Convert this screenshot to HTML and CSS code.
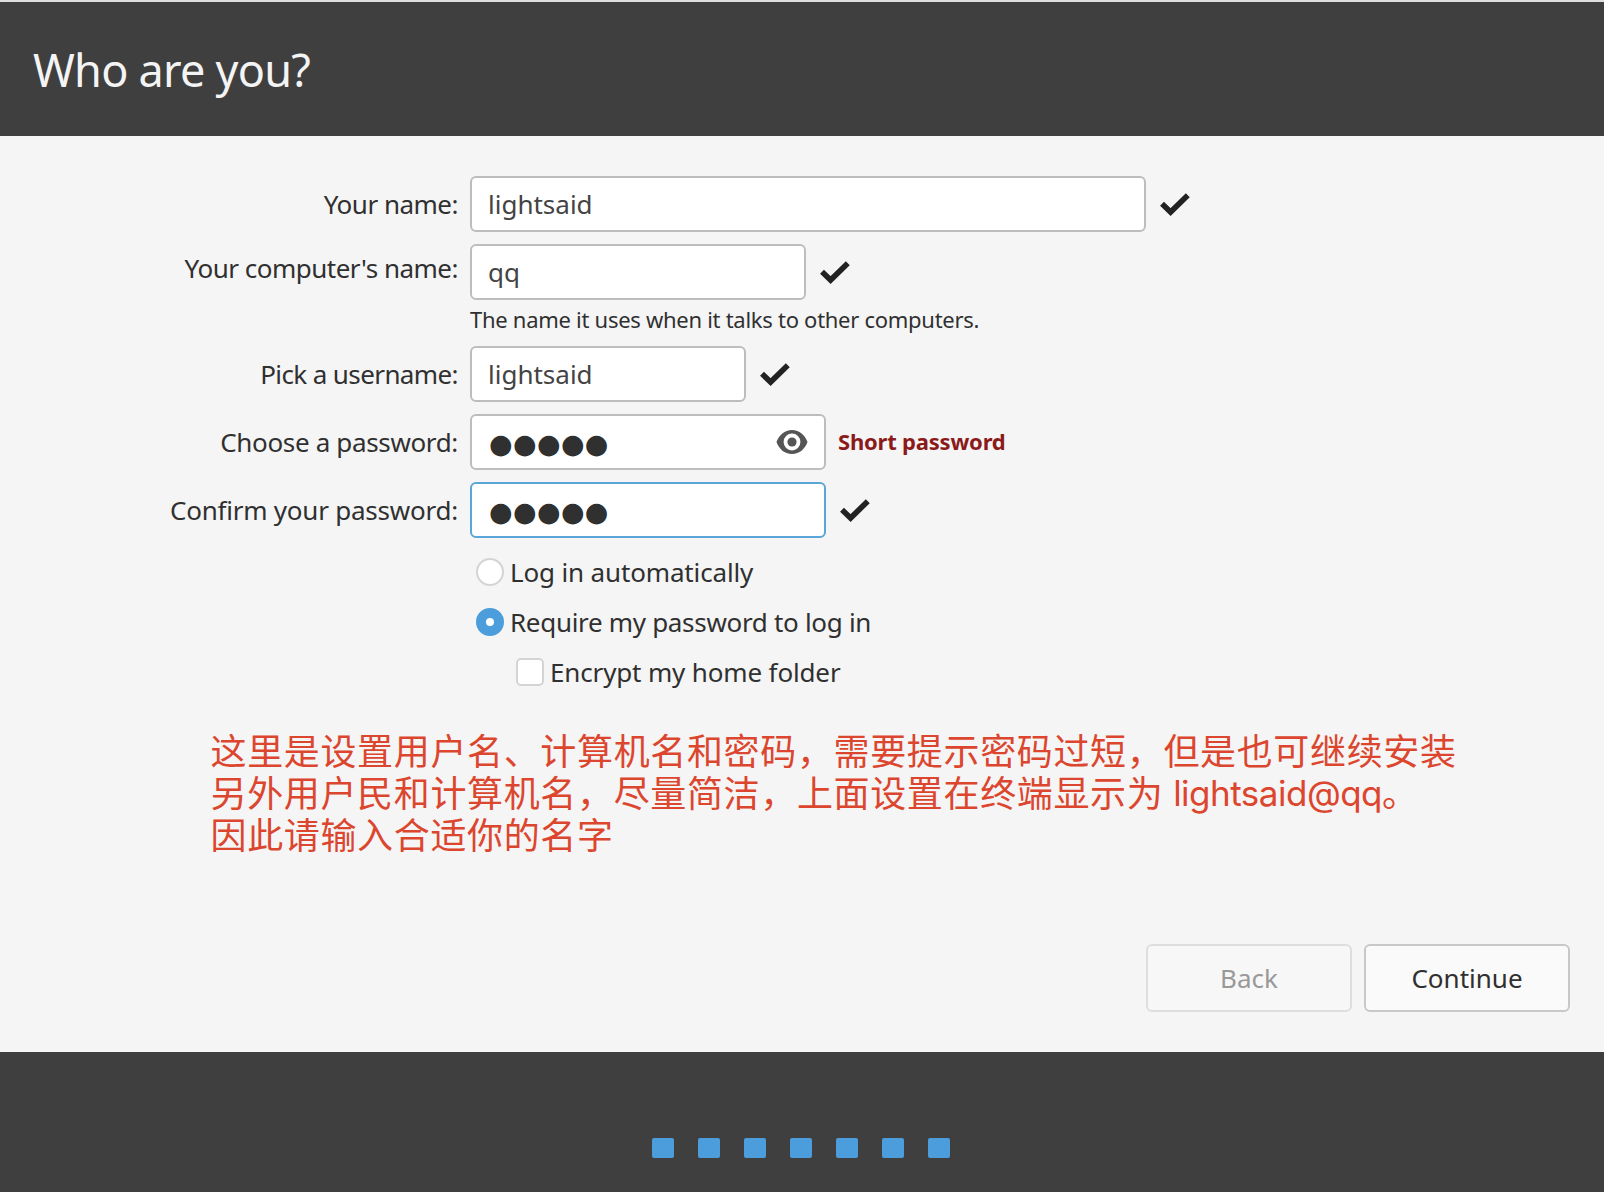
FILE: index.html
```html
<!DOCTYPE html>
<html lang="en">
<head>
<meta charset="utf-8">
<title>Who are you?</title>
<link rel="stylesheet" href="styles.css">
</head>
<body>
<svg class="defs" width="0" height="0">
  <symbol id="check" viewBox="0 0 32 26"><path d="M3 12.8 L11.6 21 L28.8 4.2" fill="none" stroke="#222" stroke-width="5.6"/></symbol>
</svg>
<header class="header"><h1 class="title">Who are you?</h1></header>
<main class="content">
  <div class="form">
    <div class="row">
      <span class="label name">Your name:</span>
      <div class="field wide"><span class="value">lightsaid</span></div>
      <svg class="check"><use href="#check"/></svg>
    </div>
    <div class="row">
      <span class="label computer">Your computer's name:</span>
      <div class="field host"><span class="value">qq</span></div>
      <svg class="check"><use href="#check"/></svg>
    </div>
    <p class="note">The name it uses when it talks to other computers.</p>
    <div class="row">
      <span class="label user">Pick a username:</span>
      <div class="field short"><span class="value">lightsaid</span></div>
      <svg class="check"><use href="#check"/></svg>
    </div>
    <div class="row">
      <span class="label choose">Choose a password:</span>
      <div class="field pass"><span class="dots">●●●●●</span>
        <svg class="eye" viewBox="0 0 32 26"><path fill="#555" fill-rule="evenodd" d="M16 1C8.500 1 3 6 .5 13C3 20 8.500 25 16 25C23.500 25 29 20 31.500 13C29 6 23.500 1 16 1ZM16 4.600a8.400 8.400 0 1 1 0 16.800a8.400 8.400 0 1 1 0-16.800Z"/><circle cx="16" cy="13" r="4.600" fill="#555"/></svg>
      </div>
      <span class="warning">Short password</span>
    </div>
    <div class="row">
      <span class="label confirm">Confirm your password:</span>
      <div class="field pass focused"><span class="dots">●●●●●</span></div>
      <svg class="check"><use href="#check"/></svg>
    </div>
    <div class="options">
      <div class="option auto"><span class="radio"></span><span>Log in automatically</span></div>
      <div class="option require"><span class="radio selected"></span><span>Require my password to log in</span></div>
      <div class="option encrypt"><span class="checkbox"></span><span>Encrypt my home folder</span></div>
    </div>
  </div>
  <div class="annotation" lang="zh-CN">
    <p>这里是设置用户名、计算机名和密码，需要提示密码过短，但是也可继续安装</p>
    <p>另外用户民和计算机名，尽量简洁，上面设置在终端显示为 <span class="latin">lightsaid@qq</span>。</p>
    <p>因此请输入合适你的名字</p>
  </div>
  <div class="actions">
    <div class="button disabled">Back</div>
    <div class="button">Continue</div>
  </div>
</main>
<footer class="footer"><i></i><i></i><i></i><i></i><i></i><i></i><i></i></footer>
</body>
</html>
```
FILE: styles.css
```css
* { box-sizing: border-box; }
body {
  margin: 0;
  width: 1604px;
  height: 1192px;
  display: flex;
  flex-direction: column;
  overflow: hidden;
  background: #f5f5f5;
  color: #303030;
  font: 26px/32px "Noto Sans", "Noto Sans CJK SC", sans-serif;
}
p, h1 { margin: 0; }
.defs { position: absolute; }
.header {
  height: 136px;
  border-top: 2px solid #dedede;
  background: #3f3f3f;
  padding: 38px 0 0 33px;
}
.title { color: #f4f4f4; font-size: 45px; line-height: 60px; font-weight: 400; letter-spacing: -.75px; }
.content { height: 916px; padding-top: 40px; display: flex; flex-direction: column; }
.form { height: 552px; }
.row { display: flex; align-items: center; height: 56px; margin-bottom: 12px; white-space: nowrap; }
.label { width: 458px; margin-right: 12px; text-align: right; letter-spacing: -.5px; }
.computer { padding-bottom: 8px; }
.user { letter-spacing: -.6px; }
.choose { letter-spacing: -.35px; }
.confirm { letter-spacing: -.23px; }
.field {
  height: 56px;
  display: flex;
  align-items: center;
  justify-content: space-between;
  padding: 0 16px;
  background: #fff;
  border: 2px solid #bdbdbd;
  border-radius: 6px;
}
.wide { width: 676px; }
.host { width: 336px; }
.short { width: 276px; }
.pass { width: 356px; }
.focused { border-color: #5ba6d8; }
.value { color: #444; }
.dots { font: 27px/40px "DejaVu Sans", sans-serif; padding: 3px 0 0 1px; letter-spacing: .4px; }
.check { width: 32px; height: 26px; margin-left: 13px; }
.eye { width: 32px; height: 26px; }
.warning { margin: -2px 0 0 12px; font-size: 22px; font-weight: 700; color: #8b1a1a; letter-spacing: -.2px; }
.note { margin: -12px 0 10px 470px; height: 36px; padding-top: 3px; font-size: 22px; letter-spacing: -.28px; }
.options { margin-top: -3px; padding-left: 476px; }
.option { display: flex; align-items: center; height: 50px; gap: 6px; letter-spacing: -.15px; }
.require { letter-spacing: -.31px; }
.encrypt { margin-left: 40px; }
.radio, .checkbox { width: 28px; height: 28px; background: #fff; border: 2px solid #d4d4d4; border-radius: 50%; }
.checkbox { border-radius: 5px; }
.selected { border: 10px solid #4b9ddb; }
.annotation {
  height: 176px;
  padding-left: 210.5px;
  color: #dc462e;
  font: 36px/42px "Noto Sans CJK SC", sans-serif;
  letter-spacing: .65px;
  white-space: nowrap;
}
.annotation p { height: 42px; }
.latin { font-family: Inter, sans-serif; font-size: 35px; line-height: 1; letter-spacing: -.5px; margin-left: 1px; vertical-align: 1px; }
.actions { display: flex; justify-content: flex-end; gap: 12px; padding: 40px 34px 0 0; }
.button {
  width: 206px;
  height: 68px;
  display: flex;
  align-items: center;
  justify-content: center;
  background: #fafafa;
  border: 2px solid #c8c8c8;
  border-radius: 6px;
}
.disabled { background: #f7f7f7; border-color: #dedede; color: #999; }
.footer { flex: 1; display: flex; gap: 24px; padding: 86px 0 0 652px; background: #3f3f3f; }
.footer i { width: 22px; height: 20px; border-radius: 2px; background: #4b9ddb; }
```
